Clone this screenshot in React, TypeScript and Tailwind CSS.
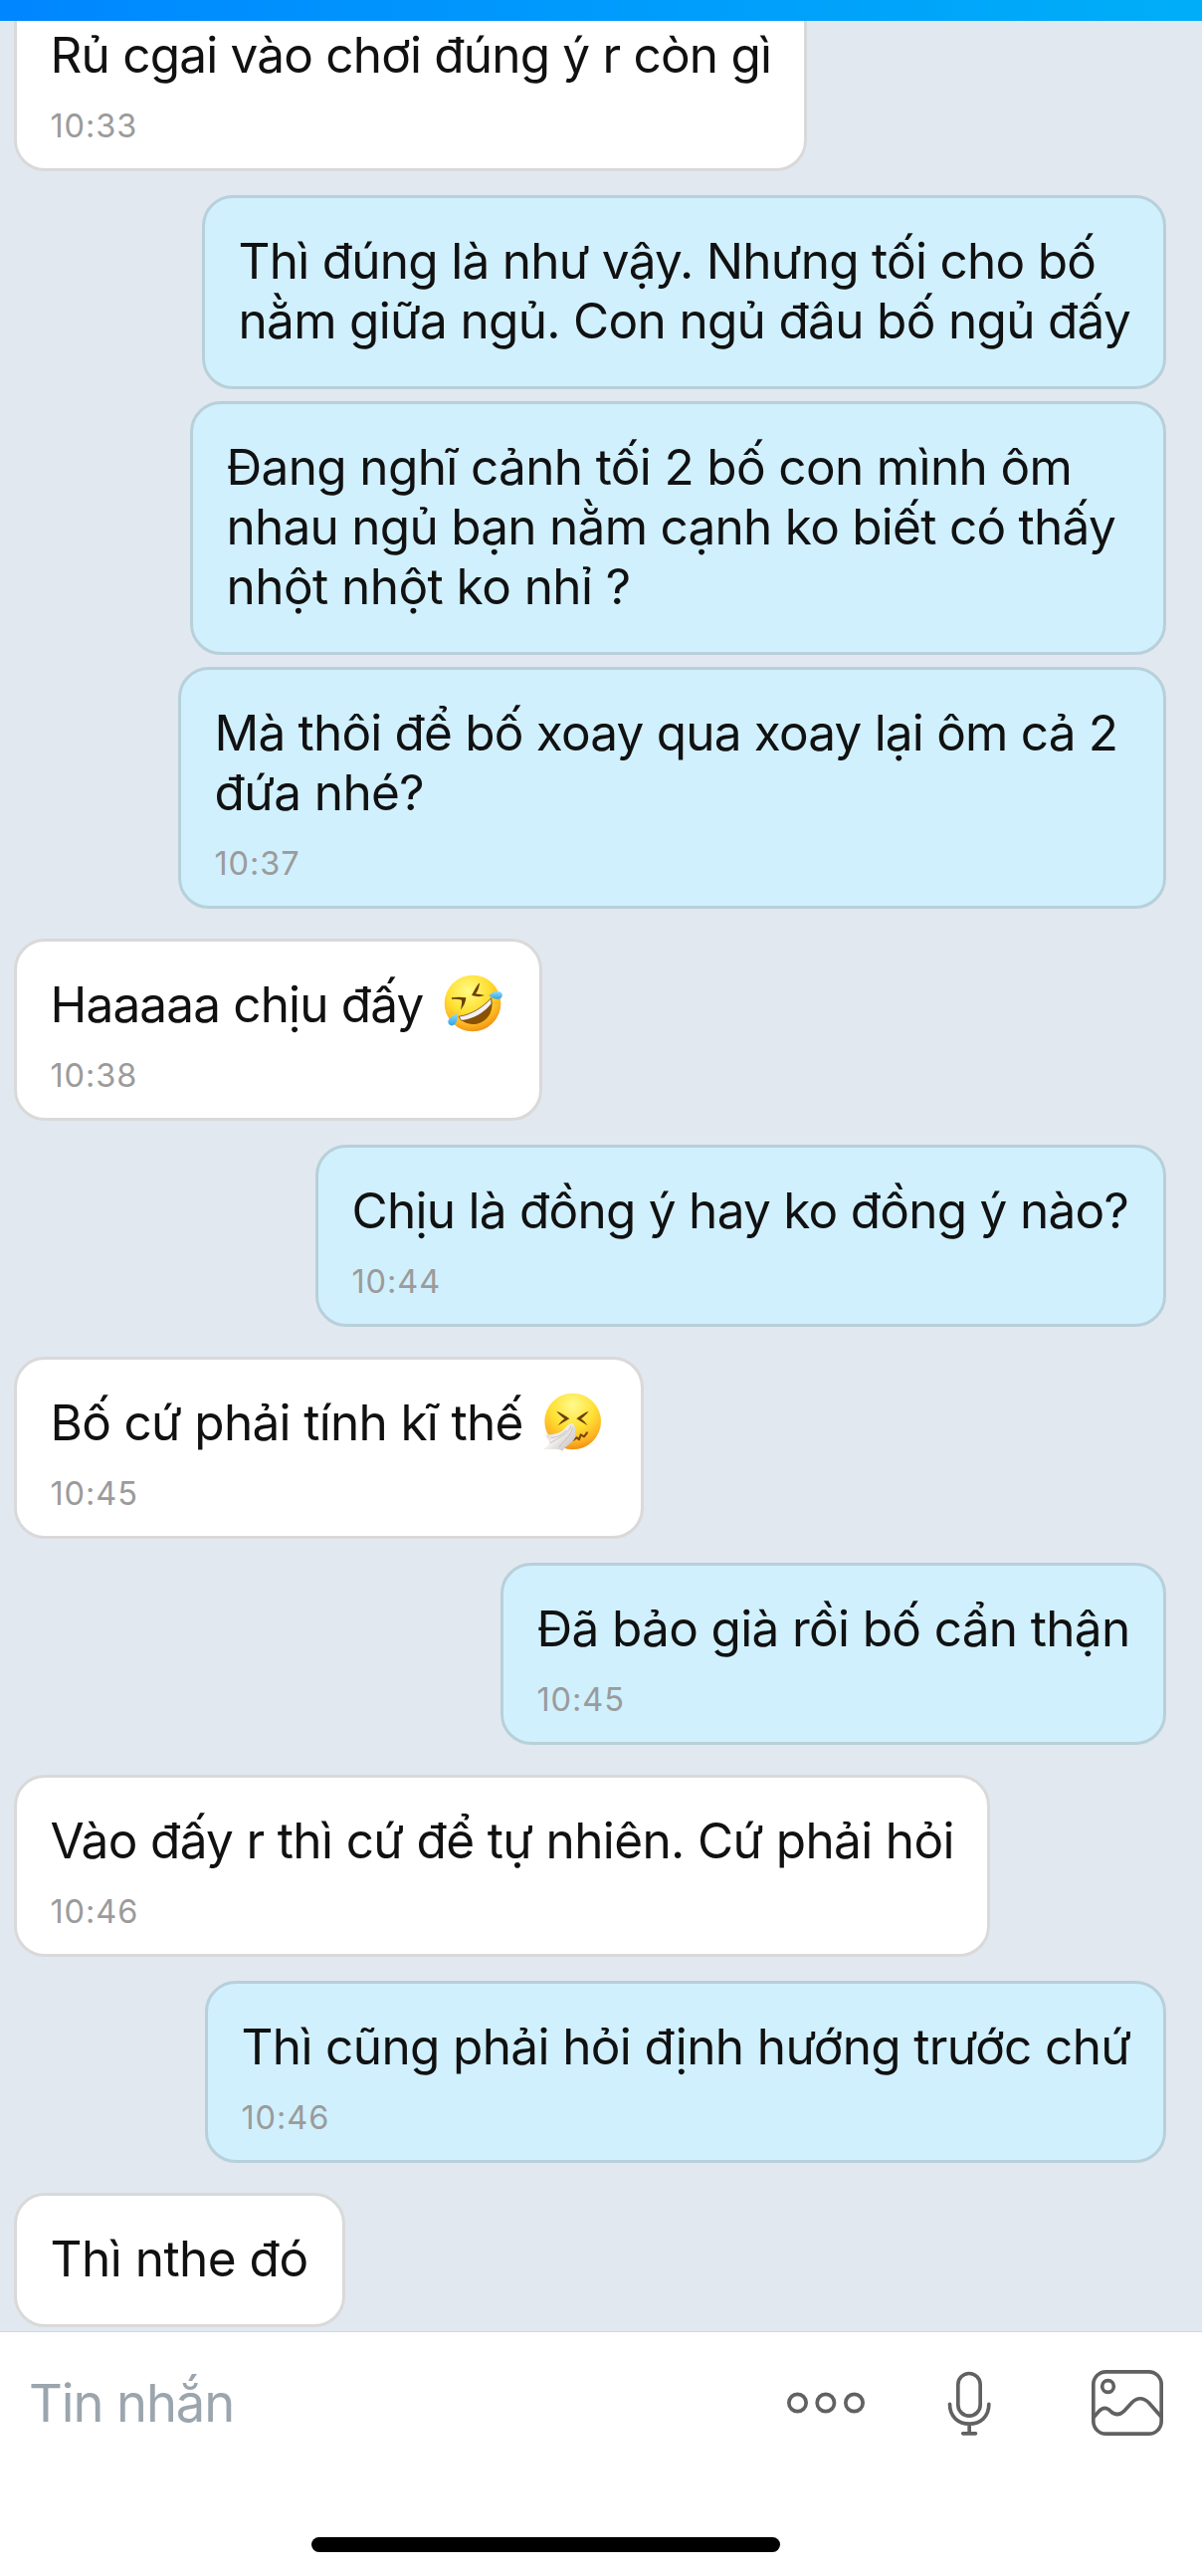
import type { ReactNode } from "react";

function LaughingFace() {
  return (
    <svg className="h-[60px] w-[60px] shrink-0" viewBox="0 0 180 180" aria-label="🤣">
      <defs>
        <radialGradient id="lf" cx="0.42" cy="0.28" r="0.75">
          <stop offset="0" stopColor="#fffb86" />
          <stop offset="0.5" stopColor="#ffdf32" />
          <stop offset="0.8" stopColor="#fdb423" />
          <stop offset="1" stopColor="#ef8d10" />
        </radialGradient>
        <linearGradient id="tear" x1="0" y1="0" x2="0" y2="1">
          <stop offset="0" stopColor="#8fdcfb" />
          <stop offset="1" stopColor="#2ca4ea" />
        </linearGradient>
      </defs>
      <circle cx="87" cy="87" r="85" fill="url(#lf)" />
      <path d="M45 127C80 122 118 100 143 71C153 110 132 143 99 149C74 153 54 144 45 127Z" fill="#8a5200" />
      <path d="M45 127C80 122 118 100 143 71L144 88C122 118 84 137 53 139Z" fill="#f3f1f5" stroke="#5f3a05" strokeWidth="2" />
      <path d="M24 70C40 67 54 68 67 70C66 84 60 95 51 107C53 95 55 86 54 77C44 74 34 74 24 75Z" fill="#6b3f03" />
      <path d="M108 27C106 40 102 51 96 58C106 60 114 61 123 63C111 68 97 67 84 63C91 49 98 37 106 26Z" fill="#6b3f03" />
      <path d="M136 64C149 50 172 46 176 60C179 74 158 82 136 64Z" fill="url(#tear)" />
      <path d="M42 118C22 126 7 139 15 149C26 162 43 150 42 118Z" fill="url(#tear)" />
    </svg>
  );
}

function SneezingFace() {
  return (
    <svg className="h-[60px] w-[60px] shrink-0" viewBox="0 0 180 180" aria-label="🤧">
      <defs>
        <radialGradient id="sf" cx="0.5" cy="0.22" r="0.8">
          <stop offset="0" stopColor="#fffa8c" />
          <stop offset="0.5" stopColor="#ffdf32" />
          <stop offset="0.82" stopColor="#fdb122" />
          <stop offset="1" stopColor="#ee8a10" />
        </radialGradient>
        <linearGradient id="tissue" x1="0" y1="0" x2="1" y2="0.8">
          <stop offset="0" stopColor="#c9c5c3" />
          <stop offset="0.5" stopColor="#f2f0ef" />
          <stop offset="1" stopColor="#c4bfbc" />
        </linearGradient>
      </defs>
      <circle cx="92" cy="87" r="85" fill="url(#sf)" />
      <path d="M43 56C57 62 71 70 82 79C70 86 58 93 47 100C53 91 60 84 67 79C58 72 49 65 43 56ZM140 56C126 62 113 70 103 79C114 86 126 93 137 100C131 91 124 84 117 79C126 72 134 65 140 56Z" fill="#6f3f05" />
      <path d="M94 143L104 136L111 142L116 127L126 133L135 121" fill="none" stroke="#7a4505" strokeWidth="6" strokeLinejoin="round" strokeLinecap="round" />
      <path d="M90 93C75 95 70 111 57 118C42 126 30 126 11 128C17 141 24 148 19 157C15 164 8 168 2 170C23 175 47 165 61 177C68 161 91 155 99 136C102 119 100 96 90 93Z" fill="url(#tissue)" />
      <path d="M87 100C79 124 50 136 23 153M92 106C88 130 65 144 51 165M27 137C49 134 62 125 72 114" fill="none" stroke="#c6c1be" strokeWidth="3" />
    </svg>
  );
}

function Bubble({ mine, box, time, children }: { mine?: boolean; box: string; time?: string; children: ReactNode }) {
  const side = mine ? "self-end border-[#b7d0d9] bg-[#d0f0fe]" : "self-start border-[#d9d9d9] bg-white";
  return (
    <div className={`shrink-0 rounded-[31px] border-[3px] pl-[33.5px] pt-[33px] ${side} ${box}`}>
      <div className="text-[49.5px] leading-[60px] text-[#111]">{children}</div>
      {time && <div className="mt-[22px] text-[32.5px] leading-[40px] tracking-[0.9px] text-[#9b9b9b]">{time}</div>}
    </div>
  );
}

function Line({ fit, children }: { fit: string; children: ReactNode }) {
  return <div className={`flex h-[60px] items-center whitespace-pre ${fit}`}>{children}</div>;
}

export default function App() {
  return (
    <div className="flex h-[2588px] w-[1208px] flex-col overflow-hidden bg-white font-['Inter',sans-serif]">
      <header className="h-[21px] shrink-0 bg-linear-to-r from-[#0086ff] to-[#00aef8]" />
      <main className="flex h-[2321px] shrink-0 flex-col overflow-hidden bg-[#e2e8f0] pl-[14px] pr-[36px]">
        <Bubble box="-mt-[32px] h-[183px] w-[797px]" time="10:33">
          <Line fit="tracking-[-0.8px]">Rủ cgai vào chơi đúng ý r còn gì</Line>
        </Bubble>
        <Bubble mine box="mt-[24px] h-[195px] w-[969px]">
          <Line fit="tracking-[-0.73px]">Thì đúng là như vậy. Nhưng tối cho bố</Line>
          <Line fit="tracking-[-0.68px]">nằm giữa ngủ. Con ngủ đâu bố ngủ đấy</Line>
        </Bubble>
        <Bubble mine box="mt-[12px] h-[255px] w-[981px]">
          <Line fit="tracking-[-0.64px]">Đang nghĩ cảnh tối 2 bố con mình ôm</Line>
          <Line fit="tracking-[-0.73px]">nhau ngủ bạn nằm cạnh ko biết có thấy</Line>
          <Line fit="tracking-[-0.55px]">nhột nhột ko nhỉ ?</Line>
        </Bubble>
        <Bubble mine box="mt-[12px] h-[243px] w-[993px]" time="10:37">
          <Line fit="tracking-[-0.8px]">Mà thôi để bố xoay qua xoay lại ôm cả 2</Line>
          <Line fit="tracking-[-0.6px]">đứa nhé?</Line>
        </Bubble>
        <Bubble box="mt-[30px] h-[183px] w-[531px]" time="10:38">
          <Line fit="tracking-[-0.85px]"><span className="w-[395px]">Haaaaa chịu đấy</span><LaughingFace /></Line>
        </Bubble>
        <Bubble mine box="mt-[24px] h-[183px] w-[855px]" time="10:44">
          <Line fit="tracking-[-0.73px]">Chịu là đồng ý hay ko đồng ý nào?</Line>
        </Bubble>
        <Bubble box="mt-[30px] h-[183px] w-[633px]" time="10:45">
          <Line fit="tracking-[-0.68px]"><span className="w-[494px]">Bố cứ phải tính kĩ thế</span><SneezingFace /></Line>
        </Bubble>
        <Bubble mine box="mt-[24px] h-[183px] w-[669px]" time="10:45">
          <Line fit="tracking-[-0.66px]">Đã bảo già rồi bố cẩn thận</Line>
        </Bubble>
        <Bubble box="mt-[30px] h-[183px] w-[981px]" time="10:46">
          <Line fit="tracking-[-0.64px]">Vào đấy r thì cứ để tự nhiên. Cứ phải hỏi</Line>
        </Bubble>
        <Bubble mine box="mt-[24px] h-[183px] w-[966px]" time="10:46">
          <Line fit="tracking-[-0.63px]">Thì cũng phải hỏi định hướng trước chứ</Line>
        </Bubble>
        <Bubble box="mt-[30px] h-[135px] w-[333px]">
          <Line fit="tracking-[-0.5px]">Thì nthe đó</Line>
        </Bubble>
      </main>
      <footer className="flex grow flex-col items-start border-t border-[#d5d8dd]">
        <div className="flex h-[141px] w-full items-center">
          <span className="w-[756px] pl-[29px] text-[52.5px] leading-[64px] tracking-[-1.1px] text-[#9ba5ad]">Tin nhắn</span>
          <svg className="h-[80px] w-[448px]" viewBox="0 162 1344 240" fill="none" stroke="#616161" strokeWidth="11" strokeLinecap="round">
            <circle cx="136.5" cy="282" r="26" />
            <circle cx="221.5" cy="282" r="26" />
            <circle cx="307.5" cy="282" r="26" />
            <rect x="620.5" y="193.5" width="67" height="128" rx="33.5" />
            <path d="M595.5 286C595.5 325 622 345.5 654.5 345.5S713.5 325 713.5 286M654.5 346V374M635 374.5H673.5" />
            <rect x="1028.5" y="188.5" width="205" height="187" rx="38" />
            <circle cx="1072.5" cy="232.5" r="17.5" />
            <path d="M1030 325L1046 307C1057 295 1069 295 1080 307C1094 320 1109 319 1122 306L1144 282C1160 265 1179 265 1196 282L1233 324" />
          </svg>
        </div>
        <div className="ml-[313px] mt-[65px] h-[15px] w-[471px] rounded-full bg-black" />
      </footer>
    </div>
  );
}
